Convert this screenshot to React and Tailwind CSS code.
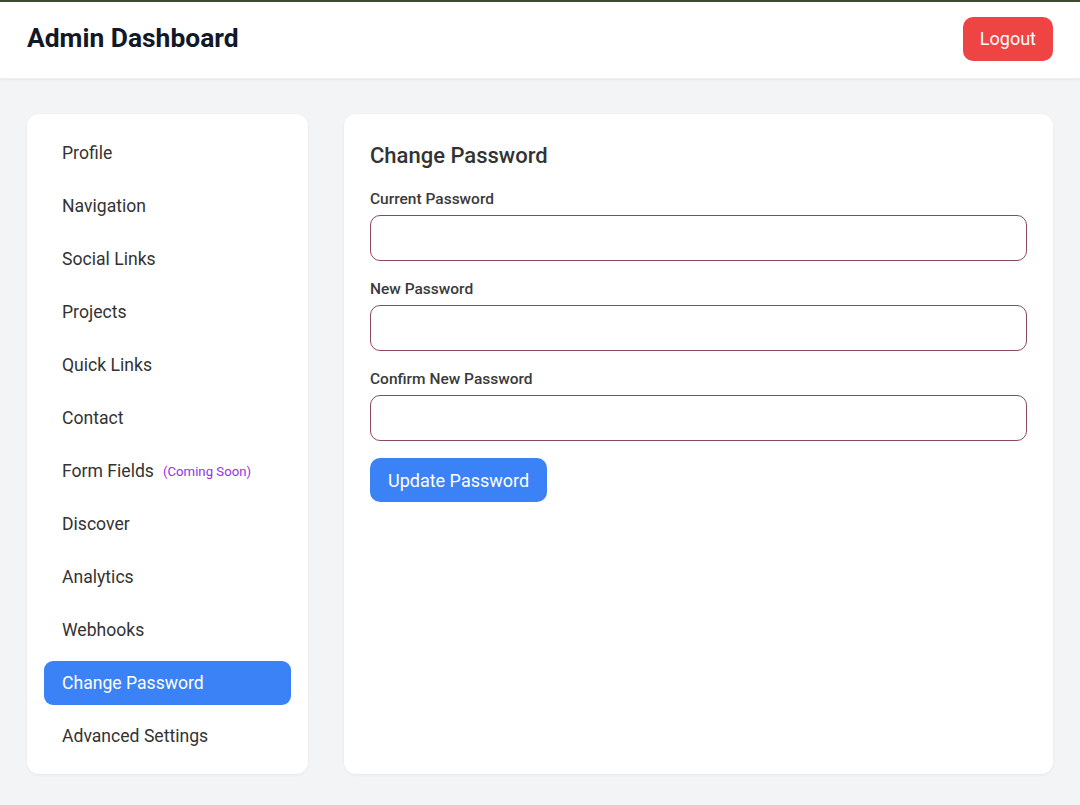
import React from "react";

const items = [
  "Profile",
  "Navigation",
  "Social Links",
  "Projects",
  "Quick Links",
  "Contact",
  "Form Fields",
  "Discover",
  "Analytics",
  "Webhooks",
  "Change Password",
  "Advanced Settings",
];

function Field({ label }) {
  return (
    <div className="flex flex-col mb-[17px]">
      <label className="text-[15.5px] leading-[22px] font-medium text-[#3a3a3a] mb-[5px]">{label}</label>
      <input
        type="password"
        className="h-[46px] w-full rounded-[10px] border border-[#8b4a5a] bg-white px-3 outline-none"
      />
    </div>
  );
}

export default function App() {
  return (
    <div
      className="min-h-[805px] bg-[#f3f4f6] flex flex-col"
      style={{ fontFamily: "Roboto, 'Noto Sans', sans-serif" }}
    >
      <div className="h-[2px] bg-[#3b4a31]" />
      <header className="bg-white h-[77px] flex items-center justify-between px-[27px] shadow-[0_1px_2px_rgba(0,0,0,0.06)] border-b border-[#eceef1]">
        <h1 className="text-[26.4px] font-bold text-[#111827] leading-none mt-[-3px]">Admin Dashboard</h1>
        <button className="bg-[#ef4444] text-white text-[18px] rounded-[10px] h-[44px] px-[17px] mt-[-3px]">
          Logout
        </button>
      </header>
      <main className="flex gap-[36px] px-[27px] pt-[35px] pb-[30px]">
        <aside className="w-[281px] shrink-0 bg-white rounded-[12px] shadow-[0_1px_3px_rgba(0,0,0,0.06)] px-[17px] pt-[17px] pb-[16px] flex flex-col gap-[9px]">
          {items.map((it) => {
            const active = it === "Change Password";
            return (
              <div
                key={it}
                className={
                  "h-[44px] flex items-center px-[18px] rounded-[9px] text-[17.6px] " +
                  (active ? "bg-[#3b82f6] text-white" : "text-[#333333]")
                }
              >
                {it}
                {it === "Form Fields" && (
                  <span className="ml-[9px] text-[13.2px] text-[#9333ea] mt-[2px]">(Coming Soon)</span>
                )}
              </div>
            );
          })}
        </aside>
        <section className="flex-1 bg-white rounded-[12px] shadow-[0_1px_3px_rgba(0,0,0,0.06)] px-[26px] pt-[27px]">
          <h2 className="text-[22px] leading-[30px] font-medium text-[#333333] mb-[17px]">Change Password</h2>
          <Field label="Current Password" />
          <Field label="New Password" />
          <Field label="Confirm New Password" />
          <button className="bg-[#3b82f6] text-white text-[18px] rounded-[10px] h-[44px] px-[18px]">
            Update Password
          </button>
        </section>
      </main>
    </div>
  );
}
